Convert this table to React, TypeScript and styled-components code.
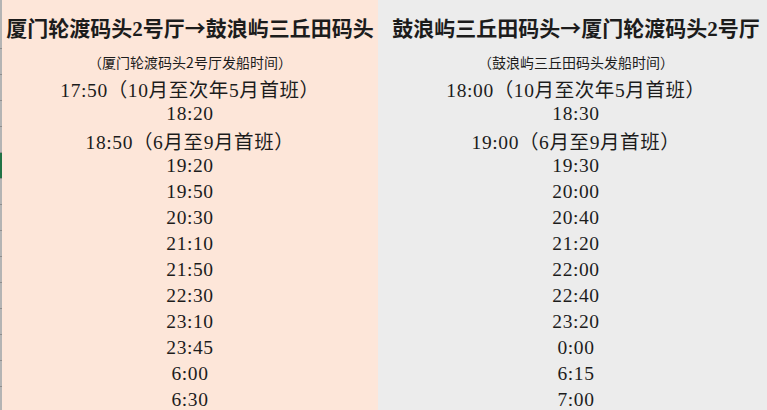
import { Fragment } from "react";
import styled, { createGlobalStyle } from "styled-components";

const GlobalStyle = createGlobalStyle`
  html, body {
    margin: 0;
    padding: 0;
    overflow: hidden;
    background: #ececec;
  }
`;

type Schedule = {
  from: string;
  to: string;
  note: string;
  times: string[];
};

const schedules: Schedule[] = [
  {
    from: "厦门轮渡码头2号厅",
    to: "鼓浪屿三丘田码头",
    note: "（厦门轮渡码头2号厅发船时间）",
    times: [
      "17:50（10月至次年5月首班）",
      "18:20",
      "18:50（6月至9月首班）",
      "19:20",
      "19:50",
      "20:30",
      "21:10",
      "21:50",
      "22:30",
      "23:10",
      "23:45",
      "6:00",
      "6:30",
    ],
  },
  {
    from: "鼓浪屿三丘田码头",
    to: "厦门轮渡码头2号厅",
    note: "（鼓浪屿三丘田码头发船时间）",
    times: [
      "18:00（10月至次年5月首班）",
      "18:30",
      "19:00（6月至9月首班）",
      "19:30",
      "20:00",
      "20:40",
      "21:20",
      "22:00",
      "22:40",
      "23:20",
      "0:00",
      "6:15",
      "7:00",
    ],
  },
];

// index of the time row that is selected in the sheet
const SELECTED_ROW = 3;

const Sheet = styled.div`
  display: grid;
  grid-template-columns: 2px 376px 396px;
  grid-template-rows: 49px 26px;
  grid-auto-rows: 26px;
  width: 774px;
  height: 410px;
  overflow: hidden;
  color: #1c1c1c;
`;

const Edge = styled.div<{ $selected?: boolean }>`
  background: ${({ $selected }) => ($selected ? "#217346" : "#b4b4b4")};
  border-bottom: 1px solid #8e8e8e;
  box-sizing: border-box;
`;

const Cell = styled.div<{ $side: "left" | "right" }>`
  display: flex;
  align-items: center;
  justify-content: center;
  white-space: nowrap;
  background: ${({ $side }) => ($side === "left" ? "#fde6d9" : "#ececec")};
  font-family: "Liberation Serif", "Noto Sans CJK SC", serif;
  font-size: 19.5px;
  letter-spacing: 0.6px;
`;

const TitleCell = styled(Cell)`
  padding-top: 4px;
  font-size: 21px;
  font-weight: bold;
  letter-spacing: 0;
`;

const Arrow = styled.span`
  font-family: "Noto Sans CJK SC", sans-serif;
  font-weight: bold;
  display: inline-block;
  width: 21px;
  text-align: center;
`;

const NoteCell = styled(Cell)`
  font-family: "Noto Sans CJK SC", sans-serif;
  font-size: 14px;
  letter-spacing: 0;
`;

export default function App() {
  const [left, right] = schedules;
  return (
    <>
      <GlobalStyle />
      <Sheet>
        <Edge />
        {schedules.map((s, i) => (
          <TitleCell key={s.from} $side={i === 0 ? "left" : "right"}>
            {s.from}
            <Arrow>→</Arrow>
            {s.to}
          </TitleCell>
        ))}

        <Edge />
        <NoteCell $side="left">{left.note}</NoteCell>
        <NoteCell $side="right">{right.note}</NoteCell>

        {left.times.map((time, i) => (
          <Fragment key={i}>
            <Edge $selected={i === SELECTED_ROW} />
            <Cell $side="left">{time}</Cell>
            <Cell $side="right">{right.times[i]}</Cell>
          </Fragment>
        ))}
      </Sheet>
    </>
  );
}
